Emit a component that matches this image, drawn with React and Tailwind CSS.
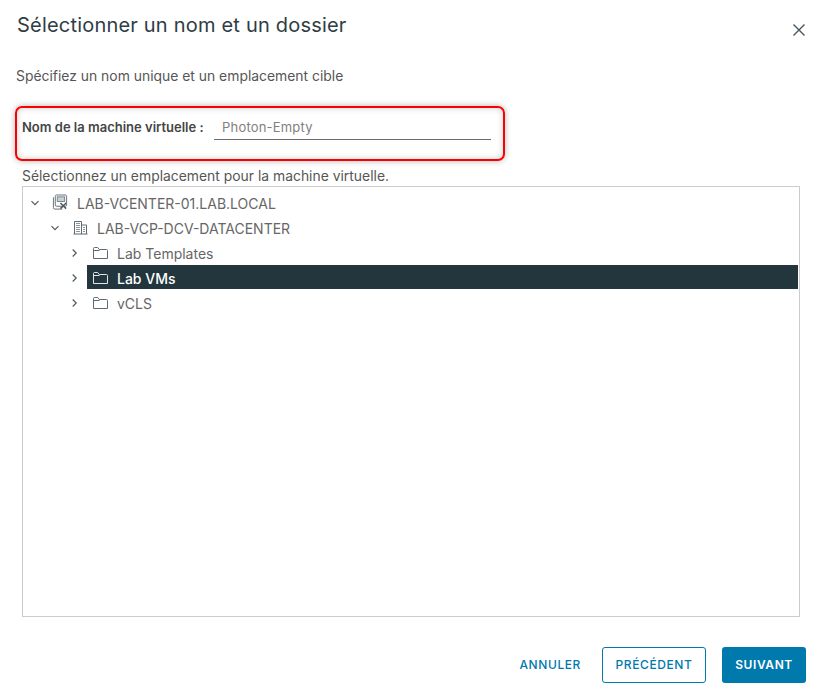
import React from "react";

function Chevron({ open }) {
  return (
    <span className="flex w-[17px] shrink-0 items-center pt-[1px]">
      <svg width="10" height="10" viewBox="0 0 10 10" fill="none" stroke="#4f5b62" strokeWidth="1.2">
        {open ? <path d="M1.5 3.2 5 6.7l3.5-3.5" /> : <path d="M2.700 1.500 6.200 5 2.700 8.500" />}
      </svg>
    </span>
  );
}

function FolderIcon({ light }) {
  const color = light ? "#dfe5e8" : "#5f6b72";
  return (
    <svg width="15" height="14" viewBox="0 0 15 14" fill="none" stroke={color} strokeWidth="1">
      <path d="M0.500 12.500v-10a1 1 0 0 1 1-1h3.200l1.500 2h7.300a1 1 0 0 1 1 1v8h-14Z" />
      <path d="M0.500 4.500h6" />
    </svg>
  );
}

function VcenterIcon() {
  return (
    <svg width="17" height="17" viewBox="0 0 17 17" fill="none" stroke="#5f6b72" strokeWidth="1">
      <rect x="3.500" y="0.500" width="12" height="12" rx="1.500" />
      <path d="M1.500 3v11a1.500 1.500 0 0 0 1.500 1.500h8" />
      <rect x="5.500" y="2.500" width="8" height="5" fill="#c9d0d4" strokeWidth="0.8" />
      <path d="m9 9 6 6M15 9l-6 6" strokeWidth="1.600" stroke="#4f5b62" />
    </svg>
  );
}

function DatacenterIcon() {
  return (
    <svg width="15" height="15" viewBox="0 0 15 15" fill="none" stroke="#5f6b72" strokeWidth="1">
      <path d="M1.500 14V1.500h7V14M8.500 5h5v9M0.500 14h14" />
      <path d="M3 3.500h4M3 5.500h4M3 7.500h4M3 9.500h4M3 11.500h4M10 7.500h2M10 9.500h2M10 11.500h2" stroke="#8a959b" />
    </svg>
  );
}

function TreeRow({ indent, open, icon, label, selected }) {
  return (
    <div className={`flex h-[25px] items-center ${indent}`}>
      <Chevron open={open} />
      <div className={`flex h-[24px] flex-1 items-center gap-[9px] self-start pl-[5px] ${selected ? "bg-[#23363e] text-white" : "text-[#666666]"}`}>
        <span className="flex w-[16px] justify-center pt-[1px]">{icon}</span>
        <span className={`pt-[2px] text-[14px] ${selected ? "font-medium" : ""}`}>{label}</span>
      </div>
    </div>
  );
}

export default function App() {
  return (
    <div className="h-[696px] w-[819px] overflow-hidden bg-white font-['Inter','Liberation_Sans',sans-serif]">
      <header className="flex items-start justify-between pl-[17px] pr-[13px] pt-[12px]">
        <h1 className="text-[20px] leading-[26px] font-normal tracking-[0.2px] text-[#2f3d44]">Sélectionner un nom et un dossier</h1>
        <button className="mt-[11px]">
          <svg width="14" height="14" viewBox="0 0 14 14" fill="none" stroke="#44545c" strokeWidth="1.400">
            <path d="m1.500 1.500 11 11M12.500 1.500l-11 11" />
          </svg>
        </button>
      </header>

      <p className="mt-[29px] ml-[16px] text-[13.900px] leading-[18px] text-[#565656]">Spécifiez un nom unique et un emplacement cible</p>

      <div className="mt-[21px] ml-[15px] flex h-[55px] w-[490px] items-start rounded-[7px] border-2 border-[#fa0000] pl-[5px] pt-[7px] shadow-[0_0_6px_rgba(0,0,0,0.3),inset_0_0_6px_rgba(0,0,0,0.2)]">
        <label className="w-[192px] pt-[3px] text-[13px] leading-[18px] font-semibold text-[#454545]">Nom de la machine virtuelle :</label>
        <div className="h-[25px] w-[277px] border-b border-[#666c70] pl-[8px] pt-[3px] text-[13px] leading-[18px] tracking-[0.2px] text-[#808080]">Photon-Empty</div>
      </div>

      <p className="mt-[6px] ml-[22px] text-[13.900px] leading-[18px] text-[#565656]">Sélectionnez un emplacement pour la machine virtuelle.</p>

      <div className="mt-[1px] ml-[22px] h-[431px] w-[778px] border border-[#cccccc] pt-[3px] pr-[1px]">
        <TreeRow indent="pl-[7px]" open icon={<VcenterIcon />} label="LAB-VCENTER-01.LAB.LOCAL" />
        <TreeRow indent="pl-[27px]" open icon={<DatacenterIcon />} label="LAB-VCP-DCV-DATACENTER" />
        <TreeRow indent="pl-[47px]" icon={<FolderIcon />} label="Lab Templates" />
        <TreeRow indent="pl-[47px]" icon={<FolderIcon light />} label="Lab VMs" selected />
        <TreeRow indent="pl-[47px]" icon={<FolderIcon />} label="vCLS" />
      </div>

      <footer className="mt-[30px] flex items-center justify-end pr-[13px]">
        <button className="mr-[21px] text-[12px] font-medium tracking-[0.6px] text-[#0079ad]">ANNULER</button>
        <button className="mr-[16px] h-[36px] w-[104px] rounded-[3px] border border-[#0079ad] text-[12px] font-medium tracking-[0.6px] text-[#0079ad]">PRÉCÉDENT</button>
        <button className="h-[36px] w-[84px] rounded-[3px] bg-[#0079ad] text-[12px] font-semibold tracking-[0.6px] text-white">SUIVANT</button>
      </footer>
    </div>
  );
}
